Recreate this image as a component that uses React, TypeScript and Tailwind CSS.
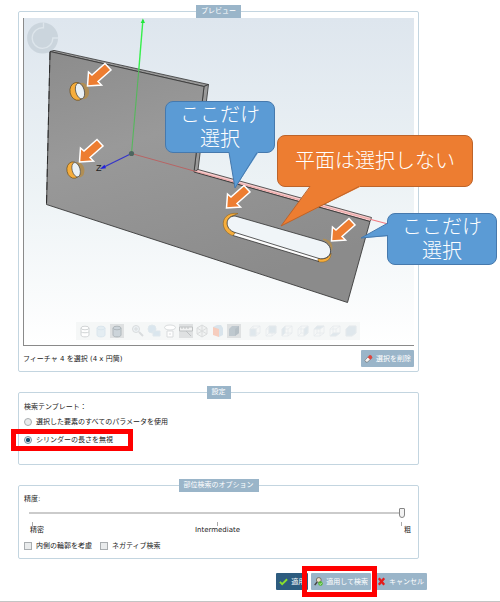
import { useState, type ReactNode } from 'react'

const fieldsetStyle = 'min-w-0 rounded-[2px] border border-[#c3d5e0] px-1'
const legendStyle = 'mx-auto h-[13px] bg-[#9ab5c9] px-[5px] leading-[13px] text-white'
const buttonStyle = 'relative flex h-[17px] items-center gap-[3px] rounded-[1px] px-[3px] text-white'
const checkStyle = 'size-2 shrink-0 appearance-none border border-[#a9adb0] bg-[#e9ebec]'

const arrows = [[87, 86], [79, 162], [226, 208], [331, 241]]

function Scene() {
  return <svg className="block h-[327px] w-full" viewBox="24 18 390 327" preserveAspectRatio="xMinYMin meet" aria-hidden="true">
    <defs>
      <linearGradient id="plate" x1="0" y1="0" x2="0.4" y2="1">
        <stop offset="0" stopColor="#8c8c8c" />
        <stop offset="0.4" stopColor="#999" />
        <stop offset="1" stopColor="#8b8b8b" />
      </linearGradient>
    </defs>

    {/* view rotation handle */}
    <circle cx="42.6" cy="38" r="15.5" fill="#cbd5dd" />
    <path d="M43.500 22.500V27.800A10.300 10.300 0 1 0 52.800 38H58" fill="none" stroke="#dde5eb" strokeWidth="1.300" />

    {/* plate */}
    <path d="M50 51.5L54 50.4L208.5 84.5L204 86.5Z" fill="#999" stroke="#333" strokeWidth="0.8" />
    <path d="M204 86.5L208.5 84.5L198 170L194 172Z" fill="#999" stroke="#333" strokeWidth="0.8" />
    <path d="M194 172L198 169.5L371.5 217.5L370 221.5Z" fill="#f5cccc" stroke="#333" strokeWidth="0.8" />
    <path d="M50 51.5L204 86.5L194 172L370 221.5L347.5 302.5L46.5 204.5Z" fill="url(#plate)" stroke="#3a3a3a" strokeWidth="0.9" />
    <path d="M50 52L46.5 204" stroke="#222" strokeWidth="0.8" strokeDasharray="8 5" />

    {/* round holes */}
    <g id="hole">
      <ellipse cx="83" cy="91" rx="6" ry="8.3" fill="#b08e55" transform="rotate(-12 83 91)" />
      <ellipse cx="77.2" cy="91.4" rx="7.2" ry="9" fill="#f6ad3c" stroke="#6b4c17" strokeWidth="0.7" transform="rotate(-12 77.2 91.4)" />
      <path d="M79 83C86 84 88 93 83 99L80 99Z" fill="#b08e55" />
      <ellipse cx="80" cy="91" rx="4.3" ry="8" fill="#eaf1f5" stroke="#444" strokeWidth="0.7" transform="rotate(-15 80 91)" />
    </g>
    <use href="#hole" transform="translate(2.500 86) scale(0.92)" />

    {/* slot */}
    <path d="M236 231L320 257L319 261.500L233 235.500Z" fill="#fdfdfd" />
    <path d="M238 213.500C227 212 222 219 223.5 226C225 232 230 235 233 235.5L236 232C227 229 225 219 232 216Z" fill="#f6ad3c" stroke="#8c6320" strokeWidth="0.6" />
    <path d="M323 240C328 242 331 246 331.500 251C334 247 332 240 323 238.500Z" fill="#b08e55" />
    <path d="M318 258.500C325 260 330 257 331 253C331.500 260 325 263.500 318 261.500Z" fill="#f6ad3c" stroke="#8c6320" strokeWidth="0.5" />
    <path d="M235 216L322 241C329 243 332 249 330 254C328 258 323 259.5 319 258.5L235 232.5C224 229 225 216 235 216Z" fill="#f0f5f8" stroke="#333" strokeWidth="0.8" />
    <path d="M233 235.5L319 261.500" stroke="#333" strokeWidth="0.8" />

    {/* axes */}
    <path d="M131.500 153.500L138.800 70" stroke="#55b85c" strokeWidth="1.1" />
    <path d="M138.800 70L142.900 20" stroke="#35ef4a" strokeWidth="1.4" />
    <path d="M142.900 18.500L145 23H140.700Z" fill="#22e63a" />
    <path d="M131.500 153.500L194 171" stroke="#b76565" strokeWidth="1" />
    <path d="M194 171L371 219.500" stroke="#e99a9a" strokeWidth="0.8" />
    <path d="M371 219.500L388 224" stroke="#f37a82" strokeWidth="1.2" />
    <path d="M131.500 153.500L103 167.500" stroke="#3535c8" strokeWidth="1.3" />
    <path d="M100 169L104.500 164.800L106 168.300Z" fill="#2020dd" />
    <circle cx="131.500" cy="153.500" r="2.600" fill="#4d6660" />
    <text x="96" y="170.500" fontSize="9" fill="#222" fontFamily="Liberation Sans, sans-serif">Z</text>
  </svg>
}

function Callout({ className, tail, children }: { className: string, tail: ReactNode, children: ReactNode }) {
  return <div className={className + ' absolute flex h-[52px] items-center justify-center rounded-lg border text-center text-xl leading-6 font-light text-white'}>
    <svg className="absolute top-0 left-0 size-px overflow-visible" aria-hidden="true">{tail}</svg>
    <p className="relative">{children}</p>
  </div>
}

const cylinder = <><path d="M3 4V11C3 13.500 11 13.500 11 11V4" /><ellipse cx="7" cy="4" rx="4" ry="1.800" /></>

const cubeFaces = [
  'M2 5H8V12H2Z', 'M5 2H12V9H5Z', 'M2 5L5 2V9L2 12Z', 'M8 5L12 2V9L8 12Z',
  'M2 5L5 2H12L8 5Z', 'M2 12L5 9H12L8 12Z', 'M2 5L5 2H12V9L8 12H2Z',
]

const toolGroups = [
  [
    { label: 'ワイヤーフレーム', icon: <g fill="#fff" stroke="#c3c7c9">{cylinder}<path d="M3 8C4 9 10 9 11 8" /></g> },
    { label: 'シェーディング', icon: <g fill="#dce8ef" stroke="#cfdee8">{cylinder}</g> },
    { label: 'エッジ付き', active: true, icon: <g fill="#bcc7ce" stroke="#96a0a6">{cylinder}</g> },
  ],
  [
    { label: 'ズーム', icon: <g fill="#e8eef1" stroke="#cdd1d3"><circle cx="5" cy="5" r="3.500" /><path d="M8 8L12 12" strokeWidth="2" /><path d="M3 5H7M5 3V7" /></g> },
    { label: '範囲', icon: <g fill="#cfdfe9" stroke="#d6e1e8"><circle cx="5" cy="5" r="4" /><path d="M6 7H13V12H6Z" /></g> },
    { label: '回転', icon: <g fill="#fff" stroke="#cdd1d3"><ellipse cx="7" cy="3.500" rx="5.500" ry="2.500" /><path d="M4 7H10V13H4Z" /><path d="M7 9V11" /></g> },
    { label: '測定', active: true, icon: <g fill="#eee" stroke="#a9adaf"><path d="M0.500 3H13.500V7H0.500Z" /><path d="M3 3V5M6 3V5M9 3V5M7 7L12 12" /></g> },
    { label: 'メッシュ', icon: <g fill="#eceeee" stroke="#cfd2d3"><path d="M7 1L12 4V10L7 13L2 10V4Z" /><path d="M2 4L7 7L12 4M7 7V13M2 10L7 7L12 10M7 1V7" /></g> },
    { label: '断面', icon: <><path d="M2 3L6 1H10L12 4V11L8 13Z" fill="#cddce6" /><path d="M2 3L8 5V13L2 11Z" fill="#f4bda9" /></> },
    { label: '透視', active: true, icon: <><path d="M2 5L5 2H12V9L8 12H2Z" fill="#aab6bf" /><path d="M8 5L12 2V9L8 12Z" fill="#9eaab3" /></> },
  ],
  ['正面', '背面', '左', '右', '上', '下', '等角'].map((label, i) => ({
    label,
    active: false,
    icon: <g fill="none" stroke="#e0e5e8" strokeWidth="0.8"><path d="M2 5L5 2H12V9L8 12H2ZM2 5H8V12M8 5L12 2M5 2V9L2 12M5 9H12" /><path d={cubeFaces[i]} fill="#d5e0e7" /></g>,
  })),
]

function Toolbar() {
  return <div className="absolute top-[304px] left-[52px] flex h-[18px] items-center gap-[7px] bg-[#f3f5f5] px-0.5 opacity-75">
    {toolGroups.map((group, i) => <div key={i} className="flex gap-0.5">
      {group.map((tool) => <button key={tool.label} type="button" aria-label={tool.label} className={tool.active ? 'size-3.5 bg-[#d5d8d9]' : 'size-3.5'}>
        <svg viewBox="0 0 14 14" className="size-3.5" aria-hidden="true">{tool.icon}</svg>
      </button>)}
    </div>)}
  </div>
}

function Annotations() {
  return <>
    <Callout className="top-[83px] left-[141px] w-[110px] border-[#4679ad] bg-[#5b9bd5]"
      tail={<><path d="M63 49H92V51L69 86L63 51Z" fill="#5b9bd5" /><path d="M63 50.500L69 86L91 50.500" fill="none" stroke="#4679ad" /></>}>
      ここだけ<br />選択
    </Callout>
    <Callout className="top-[117px] left-[253px] w-[196px] border-[#bd642a] bg-[#ed7d31]"
      tail={<><path d="M32 49H82V51L3 90L32 51Z" fill="#ed7d31" /><path d="M32 50.500L3 90L81 50.500" fill="none" stroke="#bd642a" /></>}>
      平面は選択しない
    </Callout>
    <Callout className="top-[195px] left-[363px] w-[110px] border-[#4679ad] bg-[#5b9bd5]"
      tail={<><path d="M2 8L-27 24L2 22Z" fill="#5b9bd5" /><path d="M0 9L-27 24L0 21.500" fill="none" stroke="#4679ad" /></>}>
      ここだけ<br />選択
    </Callout>
    <svg className="pointer-events-none absolute inset-0 h-[327px] w-full" viewBox="24 18 390 327" preserveAspectRatio="xMinYMin meet" aria-hidden="true">
      {arrows.map(([x, y]) => <path key={x} d="M0.500 0L1.500 -14L5 -11L18 -22.500L24 -16L11 -4.500L14.500 -1Z" transform={`translate(${x} ${y})`} fill="#ed7d31" stroke="#fff" strokeWidth="1.500" />)}
    </svg>
  </>
}

function EraserIcon() {
  return <svg viewBox="0 0 10 10" className="size-[9px]" aria-hidden="true">
    <path d="M1 7L6 1.500L9 4L4 9H2Z" fill="#f4f4f4" stroke="#6a6a6a" strokeWidth="0.700" />
    <path d="M4 3.700L6.500 1Q9.500 1.500 9 4.500L7 6.300Z" fill="#e0453e" />
  </svg>
}

function CheckIcon() {
  return <svg viewBox="0 0 10 10" className="size-[9px]" aria-hidden="true">
    <path d="M1 5.500L3.500 8L9 2.500" fill="none" stroke="#8be02c" strokeWidth="2" />
  </svg>
}

function SearchIcon() {
  return <svg viewBox="0 0 10 10" className="size-[9px]" aria-hidden="true">
    <path d="M3.500 5.500L0.800 9" stroke="#444" strokeWidth="1.600" />
    <circle cx="5.300" cy="3.300" r="2.700" fill="#e8dfc8" stroke="#655e55" strokeWidth="0.900" />
    <circle cx="7.200" cy="7.300" r="2.500" fill="#4cb82c" />
    <path d="M6 7.300L7 8.300L8.600 6.400" fill="none" stroke="#fff" strokeWidth="0.800" />
  </svg>
}

function CancelIcon() {
  return <svg viewBox="0 0 10 10" className="size-[9px]" aria-hidden="true">
    <path d="M2 1.500L8 8.500M8 1.500L2 8.500" stroke="#e51b1b" strokeWidth="2.600" />
  </svg>
}

export default function App() {
  const [template, setTemplate] = useState('ignore')
  const [accuracy, setAccuracy] = useState(100)
  const radioStyle = checkStyle + ' rounded-full checked:border-[#7b8f9c] checked:bg-radial checked:from-[#17506f] checked:from-40% checked:to-[#e3eef4] checked:to-60%'

  return <form className="border-b border-[#c4c4c4] bg-white pt-[5px] pb-[11px] font-['DejaVu_Sans','Noto_Sans_CJK_JP',sans-serif] text-[7px] leading-3 text-[#222]" onSubmit={(e) => e.preventDefault()}>
    <div className="space-y-3.5 pr-[81px] pl-[18px]">
      <fieldset className={fieldsetStyle}>
        <legend className={legendStyle}>プレビュー</legend>
        <div className="relative border-b border-l border-[#8a8a8a] bg-linear-to-b from-[#dee6ee] via-[#ecf2f5] to-white">
          <Scene />
          <Toolbar />
          <Annotations />
        </div>
        <div className="flex items-center justify-between pt-1 pb-1">
          <p>フィーチャ 4 を選択 (4 x 円筒)</p>
          <button type="button" className={buttonStyle + ' bg-[#9ab5c9]'}><EraserIcon />選択を削除</button>
        </div>
      </fieldset>

      <fieldset className={fieldsetStyle}>
        <legend className={legendStyle}>設定</legend>
        <div className="px-px pt-0.5 pb-[15px]">
          <p>検索テンプレート：</p>
          <label className="flex h-[18px] w-fit items-center gap-1">
            <input type="radio" name="template" className={radioStyle} checked={template === 'all'} onChange={() => setTemplate('all')} />
            選択した要素のすべてのパラメータを使用
          </label>
          <label className="relative flex h-[18px] w-fit items-center gap-1">
            <input type="radio" name="template" className={radioStyle} checked={template === 'ignore'} onChange={() => setTemplate('ignore')} />
            シリンダーの長さを無視
            <span className="pointer-events-none absolute -inset-y-0.5 -right-5 -left-[13px] border-5 border-[#f00]" />
          </label>
        </div>
      </fieldset>

      <fieldset className={fieldsetStyle}>
        <legend className={legendStyle}>部位検索のオプション</legend>
        <div className="px-px pb-[5px]">
          <label htmlFor="accuracy" className="block h-3.5 leading-3.5">精度:</label>
          <div className="pr-2 pl-[5px]">
            <input id="accuracy" type="range" value={accuracy} onChange={(e) => setAccuracy(Number(e.target.value))}
              className="block h-3.5 w-full appearance-none bg-transparent [&::-webkit-slider-runnable-track]:h-0.5 [&::-webkit-slider-runnable-track]:bg-[#cbcbcb] [&::-webkit-slider-thumb]:-mt-1 [&::-webkit-slider-thumb]:h-2.5 [&::-webkit-slider-thumb]:w-1.5 [&::-webkit-slider-thumb]:appearance-none [&::-webkit-slider-thumb]:rounded-t-[1px] [&::-webkit-slider-thumb]:rounded-b-[3px] [&::-webkit-slider-thumb]:border [&::-webkit-slider-thumb]:border-[#858585] [&::-webkit-slider-thumb]:bg-[#f3f3f3]" />
            <div className="flex justify-between px-[3px] pt-0.5">
              <span className="h-1 w-px bg-[#aaa]" />
              <span className="h-1 w-px bg-[#aaa]" />
              <span className="h-1 w-px bg-[#aaa]" />
            </div>
          </div>
          <div className="-mt-px grid grid-cols-3 pr-2 pl-1.5 leading-2.5">
            <span>精密</span>
            <span className="text-center">Intermediate</span>
            <span className="-mr-1.5 text-right">粗</span>
          </div>
          <div className="mt-[3px] flex h-[15px] items-center gap-2">
            <label className="flex items-center gap-1"><input type="checkbox" className={checkStyle + ' checked:bg-[#17506f]'} />内側の輪郭を考慮</label>
            <label className="flex items-center gap-1"><input type="checkbox" className={checkStyle + ' checked:bg-[#17506f]'} />ネガティブ検索</label>
          </div>
        </div>
      </fieldset>
    </div>

    <div className="mt-3.5 flex justify-end gap-[3px] pr-[73px]">
      <button type="submit" className={buttonStyle + ' bg-[#2d5c7f]'}><CheckIcon />適用</button>
      <button type="button" className={buttonStyle + ' bg-[#9ab5c9]'}>
        <SearchIcon />適用して検索
        <span className="pointer-events-none absolute -inset-y-[7px] -right-1.5 -left-[9px] z-10 border-5 border-[#f00]" />
      </button>
      <button type="button" className={buttonStyle + ' bg-[#9ab5c9]'}><CancelIcon />キャンセル</button>
    </div>
  </form>
}
